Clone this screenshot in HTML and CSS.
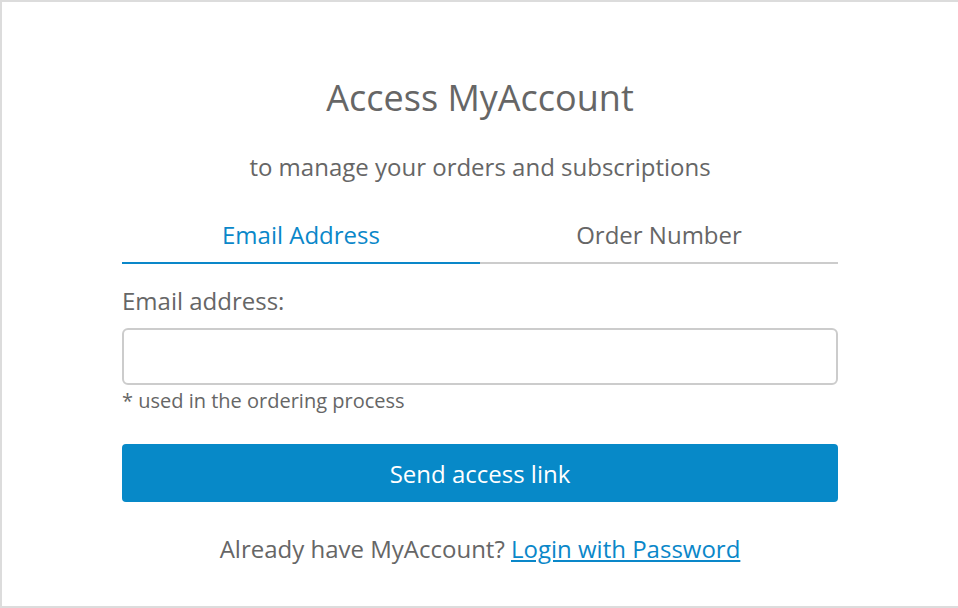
FILE: index.html
```html
<!DOCTYPE html>
<html>
<head lang="en">
    <meta charset="UTF-8">
    <title>Access MyAccount</title>
    <link rel="stylesheet" href="styles.css">
</head>
<body>
<div id="frame">
    <div id="box">
        <h1 class="title">Access MyAccount</h1>
        <p class="sub">to manage your orders and subscriptions</p>
        <ul class="tabs">
            <li class="active"><a href="#">Email Address</a></li>
            <li><a href="#">Order Number</a></li>
        </ul>
        <label class="label" for="email">Email address:</label>
        <input class="field" id="email" type="text">
        <p class="hint">* used in the ordering process</p>
        <button class="send">Send access link</button>
        <p class="login">Already have MyAccount? <a href="#">Login with Password</a></p>
    </div>
</div>
</body>
</html>
```

FILE: styles.css
```css
body, ul, li, div, h1, p {
    margin: 0;
    padding: 0;
}

body {
    font-family: "Open Sans", Arial, sans-serif;
    background: #fff;
    color: #666;
}

a {
    text-decoration: none;
}

li {
    list-style: none;
}

#frame {
    height: 604px;
    border-top: 2px solid #dcdcdc;
    border-left: 2px solid #dcdcdc;
    border-bottom: 2px solid #dcdcdc;
}

#box {
    width: 716px;
    margin: 0 auto;
    padding-top: 72px;
    display: flex;
    flex-direction: column;
}

.title {
    font-size: 36px;
    font-weight: normal;
    line-height: 48px;
    text-align: center;
}

.sub {
    margin-top: 29px;
    font-size: 24px;
    line-height: 32px;
    text-align: center;
}

.tabs {
    display: flex;
    margin-top: 36px;
}

.tabs li {
    flex: 1;
    text-align: center;
    border-bottom: 2px solid #ccc;
}

.tabs li a {
    display: block;
    padding-bottom: 11px;
    font-size: 24px;
    line-height: 32px;
    color: #666;
}

.tabs li.active {
    border-bottom-color: #0a87c9;
}

.tabs .active a {
    color: #0a87c9;
}

.label {
    margin-top: 21px;
    font-size: 24px;
    line-height: 32px;
}

.field {
    margin-top: 11px;
    height: 57px;
    box-sizing: border-box;
    border: 2px solid #ccc;
    border-radius: 6px;
    font-family: inherit;
    font-size: 22px;
    padding: 0 12px;
}

.hint {
    margin-top: 2px;
    font-size: 20px;
    line-height: 28px;
}

.send {
    margin-top: 29px;
    height: 58px;
    border: none;
    border-radius: 4px;
    background: #0789c8;
    color: #fff;
    font-family: inherit;
    font-size: 24px;
}

.login {
    margin-top: 31px;
    font-size: 24px;
    line-height: 32px;
    text-align: center;
}

.login a {
    color: #0a87c9;
    text-decoration: underline;
}
```
